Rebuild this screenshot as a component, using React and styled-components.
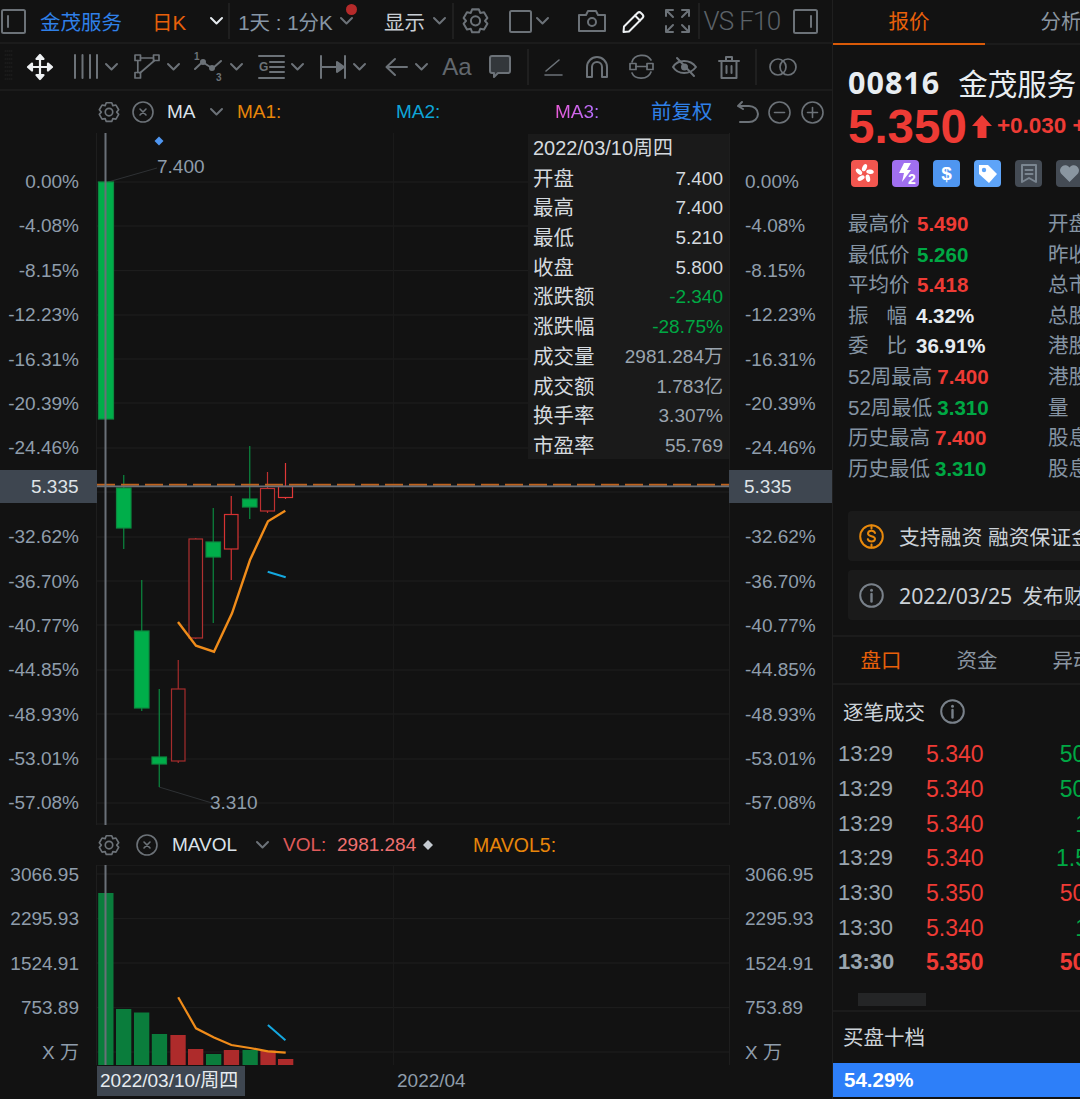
import React from "react";
import styled, { createGlobalStyle } from "styled-components";

const FONT = `"Liberation Sans", "Noto Sans CJK SC", sans-serif`;

const Global = createGlobalStyle`
  html, body { margin: 0; padding: 0; background: #121212; }
  body { font-family: ${FONT}; }
`;

// chart data in page coordinates, so the viewBox of each svg is just the crop of the page
const CANDLES = [
  { x: 98.5, w: 15, top: 182, bottom: 419, wick: null, fill: "#00ae4a" },
  { x: 116.5, w: 14.5, top: 488, bottom: 528, wick: [475, 549], fill: "#00ae4a" },
  { x: 134.5, w: 14.5, top: 631, bottom: 708, wick: [580, 711], fill: "#00ae4a" },
  { x: 152, w: 14.5, top: 757, bottom: 764, wick: [689, 787], fill: "#00ae4a" },
  { x: 171.5, w: 13.5, top: 689, bottom: 761, wick: [660, 763], line: "#a62c2c" },
  { x: 189, w: 13.5, top: 539, bottom: 638, wick: [538, 639], line: "#b03030" },
  { x: 206, w: 14.5, top: 542, bottom: 557, wick: [508, 623], fill: "#00ae4a" },
  { x: 224.5, w: 13.5, top: 514.5, bottom: 549, wick: [496, 580], line: "#d63232" },
  { x: 242.5, w: 14.5, top: 499, bottom: 507, wick: [446, 519], fill: "#00ae4a" },
  { x: 260.5, w: 14, top: 488.5, bottom: 511, wick: [472, 513], line: "#bd3030" },
  { x: 278.5, w: 14, top: 486.5, bottom: 497.5, wick: [463, 499], line: "#e03838" },
];

const VOLUMES = [
  { x: 98.2, top: 893, c: "#0a7d3c" },
  { x: 116, top: 1009, c: "#0a7d3c" },
  { x: 134, top: 1012.5, c: "#0a7d3c" },
  { x: 151.8, top: 1034, c: "#0a7d3c" },
  { x: 170.4, top: 1035, c: "#ae2b2b" },
  { x: 188, top: 1049, c: "#ae2b2b" },
  { x: 206, top: 1054, c: "#0a7d3c" },
  { x: 223.8, top: 1050, c: "#ae2b2b" },
  { x: 242.5, top: 1050, c: "#0a7d3c" },
  { x: 260.4, top: 1050.5, c: "#ae2b2b" },
  { x: 278, top: 1059, c: "#ae2b2b" },
];

const PRICE_GRID = [182, 226, 270.6, 315, 359, 403, 448, 492, 537, 581, 625, 670, 714, 759, 803, 824];
const VOL_GRID = [874, 918.7, 963, 1007.7, 1052];
const PERCENTS = ["0.00%", "-4.08%", "-8.15%", "-12.23%", "-16.31%", "-20.39%", "-24.46%", "", "-32.62%", "-36.70%", "-40.77%", "-44.85%", "-48.93%", "-53.01%", "-57.08%"];
const VOL_TICKS = ["3066.95", "2295.93", "1524.91", "753.89", "X 万"];

const QUOTE_ROWS = [
  ["开盘", "7.400"],
  ["最高", "7.400"],
  ["最低", "5.210"],
  ["收盘", "5.800"],
  ["涨跌额", "-2.340", "down"],
  ["涨跌幅", "-28.75%", "down"],
  ["成交量", "2981.284万", "dim"],
  ["成交额", "1.783亿", "dim"],
  ["换手率", "3.307%", "dim"],
  ["市盈率", "55.769", "dim"],
];

const STATS = [
  ["最高价", "5.490", "up", "开盘"],
  ["最低价", "5.260", "down", "昨收"],
  ["平均价", "5.418", "up", "总市值"],
  [["振", "幅"], "4.32%", "plain", "总股本"],
  [["委", "比"], "36.91%", "plain", "港股本"],
  ["52周最高", "7.400", "up", "港股值"],
  ["52周最低", "3.310", "down", "量　比"],
  ["历史最高", "7.400", "up", "股息"],
  ["历史最低", "3.310", "down", "股息率"],
];

const TRADES = [
  ["13:29", "5.340", "5000", "down"],
  ["13:29", "5.340", "5000", "down"],
  ["13:29", "5.340", "1万", "down"],
  ["13:29", "5.340", "1.5万", "down"],
  ["13:30", "5.350", "5000", "up"],
  ["13:30", "5.340", "1万", "down"],
  ["13:30", "5.350", "5000", "up", true],
];

const TONE = { up: "#ee3b35", down: "#00a844", plain: "#e6ebef" };

const Page = styled.div`
  width: 1080px;
  height: 1099px;
  overflow: hidden;
  display: flex;
  background: #121212;
  color: #c8ced4;
  font-family: ${FONT};
`;

const Left = styled.div`
  width: 832px;
  flex: none;
  border-right: 1px solid #1f1f1f;
`;

const Right = styled.div`
  width: 247px;
  flex: none;
  overflow: hidden;
`;

const Bar = styled.div`
  display: flex;
  align-items: center;
  height: ${(p) => p.$h}px;
  border-bottom: 2px solid #1b1b1b;
  box-sizing: border-box;
`;

const Slot = styled.div`
  position: relative;
  flex: none;
  display: flex;
  align-items: center;
  justify-content: center;
  margin-left: ${(p) => p.$ml || 0}px;
  width: ${(p) => p.$w}px;
  white-space: nowrap;
  color: ${(p) => p.$c || "#6c7278"};
  font-size: ${(p) => p.$fs || 20.5}px;
`;

const Divider = styled.div`
  flex: none;
  width: 2px;
  height: ${(p) => p.$h || 36}px;
  margin-left: ${(p) => p.$ml || 0}px;
  background: #1f1f1f;
`;

const RedDot = styled.span`
  position: absolute;
  top: -13px;
  right: -4px;
  width: 11px;
  height: 11px;
  border-radius: 50%;
  background: #b52a2a;
`;

const ThinText = styled.span`
  font-family: Roboto, ${FONT};
  font-weight: 300;
  font-size: 26px;
  letter-spacing: -0.7px;
  color: #5c6268;
`;

const Ico = styled.svg`
  display: block;
  flex: none;
  fill: none;
  color: ${(p) => p.$c || "inherit"};
  stroke: currentColor;
  stroke-width: ${(p) => p.$sw || 2};
  stroke-linecap: round;
  stroke-linejoin: round;
  overflow: visible;
`;

const Chevron = () => (
  <Ico width="13" height="8" viewBox="0 0 13 8">
    <path d="M1 1l5.5 5.5L12 1" />
  </Ico>
);

const Gear = ({ size = 27 }) => (
  <Ico width={size} height={(size * 22) / 20} viewBox="2 0 20 22" $sw={1.5}>
    <path d="M9.5 2.5h5l1 2.6 2.8-.5 2.5 4.3-1.8 2.1 1.8 2.1-2.5 4.3-2.8-.5-1 2.6h-5l-1-2.6-2.8.5-2.5-4.3 1.8-2.1-1.8-2.1 2.5-4.3 2.8.5z" />
    <circle cx="12" cy="11" r="3.4" />
  </Ico>
);

const CloseCircle = ({ size = 22 }) => (
  <Ico width={size} height={size} viewBox="0 0 22 22" $sw={1.6}>
    <circle cx="11" cy="11" r="10" />
    <path d="M8 8l6 6M14 8l-6 6" />
  </Ico>
);

const PanelIcon = ({ flip }) => (
  <Ico width="25" height="25" viewBox="0 0 25 25">
    <rect x="1" y="1" width="23" height="23" rx="1.5" />
    <path d={flip ? "M18 7v11" : "M7 7v11"} />
  </Ico>
);

const MoveIcon = () => (
  <Ico width="28" height="28" viewBox="0 0 28 28" $sw={2.2} $c="#eef1f3">
    <path d="M14 3v22M3 14h22" />
    <path d="M10.5 6L14 2l3.5 4zM10.5 22l3.5 4 3.5-4zM6 10.5L2 14l4 3.5zM22 10.5l4 3.5-4 3.5z" fill="currentColor" />
  </Ico>
);

const VLinesIcon = () => (
  <Ico width="24" height="25" viewBox="0 0 24 25">
    <path d="M1 1v23M8.5 1v23M16 1v23M23 1v23" />
  </Ico>
);

const PolyIcon = () => (
  <Ico width="26" height="25" viewBox="0 0 26 25" $sw={1.7}>
    <rect x="1" y="1" width="5.5" height="5.5" />
    <rect x="19.5" y="1" width="5.5" height="5.5" />
    <rect x="1" y="18.5" width="5.5" height="5.5" />
    <path d="M6.5 4h13M3.8 6.500v12M20.5 6.500L6 19" />
  </Ico>
);

const WaveIcon = () => (
  <Ico width="30" height="30" viewBox="0 0 30 30">
    <path d="M1 17l7.5-7 10 6.500L27 9" />
    <circle cx="9" cy="10" r="2" fill="currentColor" />
    <circle cx="18" cy="16" r="2" fill="currentColor" />
    <text x="0" y="8" fontSize="10" fontWeight="700" fill="currentColor" stroke="none">1</text>
    <text x="22" y="29" fontSize="10" fontWeight="700" fill="currentColor" stroke="none">3</text>
  </Ico>
);

const FibIcon = () => (
  <Ico width="26" height="24" viewBox="0 0 26 24">
    <path d="M1 1h25M12 7h14M12 12h14M12 17h14M1 23h25" />
    <text x="1" y="16" fontSize="12" fontWeight="700" fill="currentColor" stroke="none">G</text>
  </Ico>
);

const MeasureIcon = () => (
  <Ico width="26" height="24" viewBox="0 0 26 24">
    <path d="M1 1v22M25 1v22M1 12h22" />
    <path d="M17 7l7 5-7 5z" fill="currentColor" />
  </Ico>
);

const ArrowIcon = () => (
  <Ico width="23" height="20" viewBox="0 0 23 20">
    <path d="M22 10H2M10 2l-8.500 8 8.500 8" />
  </Ico>
);

const CommentIcon = () => (
  <Ico width="22" height="24" viewBox="0 0 22 24">
    <path d="M3 1h16a2 2 0 0 1 2 2v13a2 2 0 0 1-2 2H9l-4 4v-4H3a2 2 0 0 1-2-2V3a2 2 0 0 1 2-2z" fill="#33373b" />
  </Ico>
);

const AngleIcon = () => (
  <Ico width="18" height="18" viewBox="0 0 18 18" $sw={1.6}>
    <path d="M1 17h17M2 13L15 2" />
  </Ico>
);

const MagnetIcon = () => (
  <Ico width="22" height="22" viewBox="0 0 22 22">
    <path d="M1 21V11a10 10 0 0 1 20 0v10h-5V11a5 5 0 0 0-10 0v10z" />
  </Ico>
);

const LinkIcon = () => (
  <Ico width="25" height="26" viewBox="0 0 25 26" $sw={1.7}>
    <rect x="1" y="9.5" width="6" height="6" />
    <rect x="18" y="9.5" width="6" height="6" />
    <path d="M7 12.5h11M3 8c2-8 15-9 19-2M22 18c-3 8-16 8-19 1" />
  </Ico>
);

const EyeOffIcon = () => (
  <Ico width="25" height="22" viewBox="0 0 25 22">
    <path d="M1 11C6 3 18 3 24 11c-6 8-18 8-23 0z" />
    <path d="M5 2l17 18" />
    <circle cx="12.5" cy="11" r="3.5" fill="currentColor" stroke="none" />
  </Ico>
);

const TrashIcon = () => (
  <Ico width="22" height="24" viewBox="0 0 22 24">
    <path d="M1 6h20M8 6V2h6v4M3.5 6v17h15V6M8.500 11v7M13.500 11v7" />
  </Ico>
);

const RingsIcon = () => (
  <Ico width="28" height="18" viewBox="0 0 28 18" $sw={1.7}>
    <circle cx="9" cy="9" r="8" />
    <circle cx="19" cy="9" r="8" />
  </Ico>
);

const CameraIcon = () => (
  <Ico width="28" height="22" viewBox="0 0 28 22">
    <path d="M1 5h7l2-4h8l2 4h7v16H1z" />
    <circle cx="14" cy="12" r="4" />
  </Ico>
);

const PencilIcon = () => (
  <Ico width="23" height="23" viewBox="0 0 23 23" $c="#eef1f3">
    <path d="M2 16.500L15.500 3a2.500 2.500 0 0 1 3.500 0L20.500 4.500a2.500 2.500 0 0 1 0 3.500L7 21.500 1.500 22z" />
    <path d="M13 5.500l5 5" />
  </Ico>
);

const ExpandIcon = () => (
  <Ico width="25" height="24" viewBox="0 0 25 24">
    <path d="M1 7V1h7M17 1h7v6M1 17v6h7M17 23h7v-6M2 2l6 6M23 2l-6 6M2 22l6-6M23 22l-6-6" />
  </Ico>
);

const UndoIcon = () => (
  <Ico width="22" height="22" viewBox="0 0 22 22">
    <path d="M5 1L1 5l5 3M1 5h11a9 8 0 0 1 0 16H3" />
  </Ico>
);

const RoundIcon = ({ plus }) => (
  <Ico width="23" height="23" viewBox="0 0 23 23" $sw={1.6}>
    <circle cx="11.500" cy="11.500" r="10.500" />
    <path d={plus ? "M6.500 11.500h10M11.500 6.500v10" : "M6.500 11.500h10"} />
  </Ico>
);

const LegendBar = styled.div`
  display: flex;
  align-items: center;
  height: ${(p) => p.$h}px;
  font-size: 19px;
`;

const LegendText = styled.span`
  flex: none;
  width: ${(p) => p.$w}px;
  margin-left: ${(p) => p.$ml || 0}px;
  padding-bottom: ${(p) => p.$pb || 0}px;
  color: ${(p) => p.$c};
  font-size: ${(p) => p.$fs || 19}px;
  white-space: nowrap;
`;

const GradientText = styled(LegendText)`
  background: linear-gradient(90deg, #ea5cd8, #b070ff);
  -webkit-background-clip: text;
  background-clip: text;
  color: transparent;
`;

const Small = styled.span`
  flex: none;
  margin-left: ${(p) => p.$ml}px;
  color: #6c7278;
`;

const ChartRow = styled.div`
  position: relative;
  display: grid;
  grid-template-columns: 97px 632px 103px;
  height: ${(p) => p.$h}px;
`;

const Axis = styled.div`
  display: flex;
  flex-direction: column;
  margin-top: ${(p) => p.$top}px;
  height: 0;
  font-size: 19px;
  color: #8f9dab;
  white-space: nowrap;
`;

const Tick = styled.div`
  flex: none;
  height: 44.4px;
  line-height: 44.4px;
  text-align: ${(p) => (p.$right ? "left" : "right")};
  padding: ${(p) => (p.$right ? "0 0 0 16px" : "0 18px 0 0")};
`;

const Plot = styled.div`
  position: relative;
  border-left: 1px solid #1e1e1e;
  border-right: 1px solid #1e1e1e;
  margin: 0 -1px;
  svg {
    display: block;
  }
`;

const QuoteCard = styled.div`
  position: absolute;
  top: 1px;
  right: 0;
  width: 201px;
  height: 325px;
  padding: 0 6px 0 5px;
  box-sizing: border-box;
  background: #1a1a1a;
  font-size: 20.5px;
`;

const QuoteRow = styled.div`
  display: flex;
  justify-content: space-between;
  height: 29.7px;
  line-height: 29.7px;
  white-space: nowrap;
  color: #d4d9de;
`;

const QuoteTitle = styled(QuoteRow)`
  font-size: 20px;
`;

const QuoteValue = styled.span`
  color: ${(p) => (p.$tone === "down" ? "#00a844" : p.$tone === "dim" ? "#9aa4ae" : "#d4d9de")};
  font-size: 19px;
`;

const PriceMark = styled.span`
  position: absolute;
  left: ${(p) => p.$x}px;
  top: ${(p) => p.$y}px;
  font-size: 19px;
  line-height: 22px;
  color: #8f9dab;
`;

const CrossBadge = styled.div`
  position: absolute;
  top: 337px;
  ${(p) => (p.$right ? "left: 729px; width: 103px; padding-left: 15px;" : "left: 0; width: 97px; padding-left: 31px;")}
  height: 33px;
  line-height: 33px;
  box-sizing: border-box;
  background: #3e4650;
  color: #dfe4e8;
  font-size: 19px;
`;

const VolDiamond = styled.svg`
  flex: none;
`;

const TimeAxis = styled.div`
  display: flex;
  padding-left: 97px;
  height: 34px;
  font-size: 19px;
  color: #8f9dab;
`;

const DateBadge = styled.div`
  flex: none;
  width: 148px;
  height: 30px;
  margin-top: 1px;
  line-height: 30px;
  padding-left: 3px;
  box-sizing: border-box;
  background: #3e4650;
  color: #e6ebef;
  white-space: nowrap;
`;

const MonthTick = styled.div`
  margin-left: 152px;
  line-height: 30px;
  margin-top: 1px;
`;

const Tabs = styled.div`
  display: flex;
  height: ${(p) => p.$h}px;
  border-bottom: 2px solid #1b1b1b;
  box-sizing: border-box;
`;

const Tab = styled.div`
  flex: none;
  width: ${(p) => p.$w}px;
  text-align: center;
  box-sizing: border-box;
  line-height: ${(p) => p.$lh}px;
  font-size: 20.5px;
  white-space: nowrap;
  color: ${(p) => (p.$active ? "#e8600a" : "#8a95a0")};
  ${(p) => p.$bar && "border-bottom: 2px solid #d95a08; margin-bottom: -2px;"}
`;

const TitleRow = styled.div`
  display: flex;
  align-items: center;
  height: 36px;
  margin-top: 19px;
  padding-left: 15px;
  white-space: nowrap;
  color: #e8edf1;
`;

const Code = styled.span`
  font-family: "Open Sans", ${FONT};
  font-weight: 700;
  font-size: 30.5px;
  letter-spacing: 1px;
`;

const Name = styled.span`
  margin-left: 18px;
  font-size: 29.5px;
`;

const PriceRow = styled.div`
  display: flex;
  align-items: center;
  height: 50px;
  margin-top: 1px;
  padding-left: 15px;
  white-space: nowrap;
  color: #ee3b35;
  font-weight: 700;
`;

const BigPrice = styled.span`
  flex: none;
  font-size: 47.5px;
`;

const UpArrow = styled.svg`
  flex: none;
  margin-left: 4px;
`;

const Change = styled.span`
  flex: none;
  margin-left: 4px;
  font-size: 22.5px;
`;

const Badges = styled.div`
  display: flex;
  gap: 14px;
  margin: 9px 0 0 18px;
`;

const Badge = styled.div`
  flex: none;
  width: 27px;
  height: 27px;
  border-radius: 4px;
  background: ${(p) => p.$bg};
  color: ${(p) => p.$c || "#fff"};
  display: flex;
  align-items: center;
  justify-content: center;
  font-weight: 700;
  font-size: 19px;
`;

const Stats = styled.div`
  margin-top: 22px;
  padding-left: 15px;
`;

const StatRow = styled.div`
  display: flex;
  height: 30.6px;
  line-height: 30.6px;
  white-space: nowrap;
  font-size: 20.5px;
  color: #8594a3;
`;

const StatMain = styled.div`
  flex: none;
  width: 200px;
  display: flex;
`;

const StatLabel = styled.span`
  flex: none;
  margin-right: 5px;
  min-width: 64px;
`;

const SpreadLabel = styled.span`
  flex: none;
  width: 59px;
  margin-right: 9px;
  display: flex;
  justify-content: space-between;
`;

const StatValue = styled.span`
  font-weight: 700;
  font-size: 20.5px;
  color: ${(p) => TONE[p.$tone]};
`;

const Notice = styled.div`
  display: flex;
  align-items: center;
  width: 262px;
  height: 50px;
  margin: ${(p) => p.$mt}px 0 0 15px;
  padding-left: 11px;
  box-sizing: border-box;
  border-radius: 4px;
  background: #1a1a1a;
  font-size: 20.8px;
  white-space: nowrap;
  color: #ccd2d8;
`;

const NoticeText = styled.span`
  margin-left: 15px;
`;

const NoticeDate = styled.span`
  font-family: "Noto Sans", ${FONT};
  font-size: 21.3px;
  margin-right: 10px;
`;

const SubHead = styled.div`
  display: flex;
  align-items: center;
  padding: 0 0 ${(p) => p.$pb || 0}px 10px;
  height: ${(p) => p.$h}px;
  box-sizing: border-box;
  font-size: 20.5px;
  color: #ccd2d8;
  white-space: nowrap;
`;

const Trades = styled.div`
  width: 280px;
`;

const TradeRow = styled.div`
  display: grid;
  grid-template-columns: 88px 105px 80px;
  height: 34.7px;
  line-height: 34.7px;
  padding-left: 5px;
  font-size: 23px;
  font-weight: ${(p) => (p.$bold ? 700 : 400)};
  white-space: nowrap;
`;

const TradeTime = styled.span`
  color: #9aa5af;
  font-size: 22px;
`;

const TradeNum = styled.span`
  color: ${(p) => TONE[p.$tone]};
  text-align: ${(p) => (p.$end ? "right" : "left")};
`;

const ScrollThumb = styled.div`
  width: 68px;
  height: 13px;
  margin: 13px 0 4px 25px;
  background: #242526;
`;

const BuyBar = styled.div`
  height: 34px;
  line-height: 33px;
  padding-left: 11px;
  background: #2d7ff9;
  color: #fff;
  font-size: 20.5px;
  font-weight: 700;
`;

const HairLine = styled.div`
  height: 2px;
  margin-top: ${(p) => p.$mt || 0}px;
  background: #1b1b1b;
`;

const PriceChart = () => (
  <svg width="632" height="692" viewBox="97 133 632 692">
    {PRICE_GRID.map((y) => (
      <line key={y} x1="97" x2="729" y1={y} y2={y} stroke="#1f1f1f" />
    ))}
    <line x1="393.5" x2="393.5" y1="133" y2="825" stroke="#1a1a1a" />
    <path d="M108 182L157 168M159 787L212 803" stroke="#2e3134" fill="none" />
    <path d="M159 136.500l4.500 4.500-4.500 4.500-4.500-4.500z" fill="#4f96f0" />
    {CANDLES.map((c) => (
      <g key={c.x}>
        {c.wick && (
          <line
            x1={c.x + c.w / 2}
            x2={c.x + c.w / 2}
            y1={c.wick[0]}
            y2={c.wick[1]}
            stroke={c.fill ? "#0b8a40" : c.line}
            strokeWidth="1.2"
          />
        )}
        <rect
          x={c.x}
          y={c.top}
          width={c.w}
          height={c.bottom - c.top}
          fill={c.fill || "#121212"}
          stroke={c.fill ? "#0b8a40" : c.line}
          strokeWidth="1.2"
        />
      </g>
    ))}
    <polyline
      points="178,622 196,645.7 214,651.7 232,613.3 250,560 268,521.3 285.3,510.7"
      fill="none"
      stroke="#f08c1a"
      strokeWidth="2.4"
    />
    <line x1="267.7" y1="571.7" x2="285.7" y2="577.3" stroke="#14a8e0" strokeWidth="2" />
    <line x1="97" x2="729" y1="484.7" y2="484.7" stroke="#c0621c" strokeWidth="2" strokeDasharray="18 6" />
    <line x1="97" x2="729" y1="486.4" y2="486.4" stroke="#6a7078" strokeWidth="1.6" />
    <line x1="105.5" x2="105.5" y1="133" y2="825" stroke="#6a7078" strokeWidth="2" />
  </svg>
);

const VolumeChart = () => (
  <svg width="632" height="200" viewBox="97 865 632 200">
    {VOL_GRID.map((y) => (
      <line key={y} x1="97" x2="729" y1={y} y2={y} stroke="#1f1f1f" />
    ))}
    <line x1="97" x2="729" y1="865.5" y2="865.5" stroke="#1a1a1a" />
    <line x1="393.5" x2="393.5" y1="865" y2="1065" stroke="#1a1a1a" />
    {VOLUMES.map((v) => (
      <rect key={v.x} x={v.x} y={v.top} width="15.3" height={1065 - v.top} fill={v.c} />
    ))}
    <polyline
      points="178.2,997.3 196,1028.3 214,1037.5 231.4,1045 250,1048 267.9,1051.3 285.7,1052.7"
      fill="none"
      stroke="#f08c1a"
      strokeWidth="2.2"
    />
    <line x1="267.9" y1="1025" x2="285.4" y2="1040.3" stroke="#14a8e0" strokeWidth="2" />
    <line x1="105.5" x2="105.5" y1="865" y2="1065" stroke="#6a7078" strokeWidth="2" />
  </svg>
);

const TopBar = () => (
  <Bar $h={44}>
    <Slot $ml={1} $w={25}><PanelIcon /></Slot>
    <Slot $ml={14} $w={82} $c="#2f80e8">金茂服务</Slot>
    <Slot $ml={31} $w={32} $c="#e8600a">日K</Slot>
    <Slot $ml={25} $w={13} $c="#e6ebef"><Chevron /></Slot>
    <Divider $ml={5} />
    <Slot $ml={8} $w={95} $c="#8796a5">1天 : 1分K</Slot>
    <Slot $ml={7} $w={13}>
      <Chevron />
      <RedDot />
    </Slot>
    <Slot $ml={31} $w={41} $c="#c8ced4">显示</Slot>
    <Slot $ml={8} $w={13}><Chevron /></Slot>
    <Divider $ml={6} />
    <Slot $ml={8} $w={27}><Gear /></Slot>
    <Slot $ml={20} $w={22}>
      <Ico width="23" height="23" viewBox="0 0 23 23"><rect x="1" y="1" width="21" height="21" rx="1.5" /></Ico>
    </Slot>
    <Slot $ml={5} $w={13}><Chevron /></Slot>
    <Slot $ml={29} $w={28}><CameraIcon /></Slot>
    <Slot $ml={16} $w={23}><PencilIcon /></Slot>
    <Slot $ml={20} $w={25}><ExpandIcon /></Slot>
    <Divider $ml={8} />
    <Slot $ml={4} $w={76}><ThinText>VS F10</ThinText></Slot>
    <Slot $ml={13} $w={25}><PanelIcon flip /></Slot>
  </Bar>
);

const grip = [56, 60, 64, 68, 72, 76, 80, 84];

const DrawBar = () => (
  <Bar $h={47}>
    <Slot $ml={5} $w={8} $c="#222">
      <Ico width="8" height="32" viewBox="0 56 8 32" $sw={1}>
        {grip.map((y) => (
          <path key={y} d={`M0 ${y}h8`} strokeDasharray="1 1" />
        ))}
      </Ico>
    </Slot>
    <Slot $ml={13} $w={28}><MoveIcon /></Slot>
    <Slot $ml={20} $w={24}><VLinesIcon /></Slot>
    <Slot $ml={7} $w={13}><Chevron /></Slot>
    <Slot $ml={16} $w={26}><PolyIcon /></Slot>
    <Slot $ml={7} $w={13}><Chevron /></Slot>
    <Slot $ml={14} $w={30}><WaveIcon /></Slot>
    <Slot $ml={6} $w={13}><Chevron /></Slot>
    <Slot $ml={15} $w={26}><FibIcon /></Slot>
    <Slot $ml={7} $w={13}><Chevron /></Slot>
    <Slot $ml={16} $w={26}><MeasureIcon /></Slot>
    <Slot $ml={7} $w={13}><Chevron /></Slot>
    <Slot $ml={19} $w={23}><ArrowIcon /></Slot>
    <Slot $ml={7} $w={13}><Chevron /></Slot>
    <Slot $ml={15} $w={28} $fs={24} $c="#62686e">Aa</Slot>
    <Slot $ml={18} $w={22}><CommentIcon /></Slot>
    <Divider $ml={16} />
    <Slot $ml={15} $w={18}><AngleIcon /></Slot>
    <Slot $ml={24} $w={22}><MagnetIcon /></Slot>
    <Slot $ml={21} $w={25}><LinkIcon /></Slot>
    <Slot $ml={18} $w={25}><EyeOffIcon /></Slot>
    <Slot $ml={21} $w={22}><TrashIcon /></Slot>
    <Divider $ml={15} />
    <Slot $ml={12} $w={28}><RingsIcon /></Slot>
  </Bar>
);

const Ticks = ({ labels, right, top }) => (
  <Axis $top={top}>
    {labels.map((label, i) => (
      <Tick key={i} $right={right}>{label}</Tick>
    ))}
  </Axis>
);

const FlagBadge = () => (
  <Badge $bg="#f2564f">
    <svg width="21" height="21" viewBox="-10.5 -10.5 21 21" fill="#fff">
      {[0, 72, 144, 216, 288].map((a) => (
        <ellipse key={a} cx="0" cy="-5.8" rx="2.2" ry="3.8" transform={`rotate(${a}) rotate(25 0 -5.8)`} />
      ))}
    </svg>
  </Badge>
);

const BoltBadge = () => (
  <Badge $bg="#a06ff0">
    <svg width="25" height="25" viewBox="0 0 25 25">
      <path d="M11 2h7l-4 7h4l-9 12 2-9H6z" fill="#fff" />
      <text x="15" y="23" fontSize="14" fontWeight="700" fill="#fff">2</text>
    </svg>
  </Badge>
);

const TagBadge = () => (
  <Badge $bg="#5ea4f8">
    <svg width="23" height="23" viewBox="0 0 23 23">
      <path d="M3 3h9l9 9-8 9-10-9z" fill="#fff" />
      <circle cx="8" cy="8" r="2.2" fill="#5ea4f8" />
    </svg>
  </Badge>
);

const NoteBadge = () => (
  <Badge $bg="#444b54" $c="#7b8691">
    <Ico width="16" height="19" viewBox="0 0 16 19" $sw={2}>
      <path d="M1 1h14v17l-7-4-7 4z" />
      <path d="M4.500 6h7M4.500 10h7" />
    </Ico>
  </Badge>
);

const HeartBadge = () => (
  <Badge $bg="#444b54">
    <svg width="21" height="19" viewBox="0 0 21 19">
      <path d="M10.500 18L2 9.500a5 5 0 0 1 8.500-6 5 5 0 0 1 8.500 6z" fill="#8a96a1" />
    </svg>
  </Badge>
);

const DollarRing = () => (
  <Ico width="25" height="25" viewBox="0 0 25 25" $c="#e8890c">
    <circle cx="12.500" cy="12.500" r="11.300" />
    <path d="M12.500 1.500v3M12.500 20.500v3M16 9c-.5-1.600-2-2.200-3.500-2.200-2 0-3.500 1-3.500 2.800 0 3.600 7 1.600 7 5.200 0 1.700-1.600 2.600-3.500 2.600-1.700 0-3.200-.7-3.700-2.300" />
  </Ico>
);

const InfoRing = () => (
  <Ico width="25" height="25" viewBox="0 0 25 25" $c="#79818a">
    <circle cx="12.500" cy="12.500" r="11.300" />
    <path d="M12.500 11v7.500" strokeWidth="2.4" />
    <circle cx="12.500" cy="7.200" r="1.500" fill="currentColor" stroke="none" />
  </Ico>
);

export default function App() {
  return (
    <>
      <Global />
      <Page>
        <Left>
          <TopBar />
          <DrawBar />
          <LegendBar $h={42}>
            <Slot $ml={98} $w={22}><Gear size={22} /></Slot>
            <Slot $ml={12} $w={22}><CloseCircle /></Slot>
            <LegendText $ml={13} $w={30} $c="#dbe3ea">MA</LegendText>
            <Small $ml={13}><Chevron /></Small>
            <LegendText $ml={14} $w={159} $c="#e8860a">MA1:</LegendText>
            <LegendText $w={159} $c="#0ea5d8">MA2:</LegendText>
            <GradientText $w={44} $c="#d050d0">MA3:</GradientText>
            <LegendText $ml={52} $w={63} $fs={20.5} $pb={4} $c="#2f80e8">前复权</LegendText>
            <Small $ml={23}><UndoIcon /></Small>
            <Small $ml={9}><RoundIcon /></Small>
            <Small $ml={10}><RoundIcon plus /></Small>
          </LegendBar>
          <ChartRow $h={692}>
            <Ticks labels={PERCENTS} top={27} />
            <Plot>
              <PriceChart />
              <PriceMark $x={60} $y={23}>7.400</PriceMark>
              <PriceMark $x={113} $y={659}>3.310</PriceMark>
              <QuoteCard>
                <QuoteTitle>2022/03/10周四</QuoteTitle>
                {QUOTE_ROWS.map(([label, value, tone]) => (
                  <QuoteRow key={label}>
                    <span>{label}</span>
                    <QuoteValue $tone={tone}>{value}</QuoteValue>
                  </QuoteRow>
                ))}
              </QuoteCard>
            </Plot>
            <Ticks labels={PERCENTS} right top={27} />
            <CrossBadge>5.335</CrossBadge>
            <CrossBadge $right>5.335</CrossBadge>
          </ChartRow>
          <LegendBar $h={40}>
            <Slot $ml={98} $w={22}><Gear size={22} /></Slot>
            <Slot $ml={16} $w={22}><CloseCircle /></Slot>
            <LegendText $ml={14} $w={66} $c="#dbe3ea">MAVOL</LegendText>
            <Small $ml={18}><Chevron /></Small>
            <LegendText $ml={14} $w={54} $c="#e05a5a">VOL:</LegendText>
            <LegendText $w={86} $c="#f07070">2981.284</LegendText>
            <VolDiamond width="10" height="10" viewBox="0 0 10 10">
              <path d="M5 0l5 5-5 5-5-5z" fill="#c4cad0" />
            </VolDiamond>
            <LegendText $ml={40} $w={84} $fs={19.5} $c="#e8860a">MAVOL5:</LegendText>
          </LegendBar>
          <ChartRow $h={200}>
            <Ticks labels={VOL_TICKS} top={-12} />
            <Plot><VolumeChart /></Plot>
            <Ticks labels={VOL_TICKS} right top={-12} />
          </ChartRow>
          <TimeAxis>
            <DateBadge>2022/03/10/周四</DateBadge>
            <MonthTick>2022/04</MonthTick>
          </TimeAxis>
        </Left>
        <Right>
          <Tabs $h={45}>
            <Tab $w={152} $lh={43} $active $bar>报价</Tab>
            <Tab $w={152} $lh={43}>分析</Tab>
          </Tabs>
          <TitleRow>
            <Code>00816</Code>
            <Name>金茂服务</Name>
          </TitleRow>
          <PriceRow>
            <BigPrice>5.350</BigPrice>
            <UpArrow width="22" height="25" viewBox="0 0 22 25">
              <path d="M11 1l10 11h-5.500v12h-9V12H1z" fill="#ee3b35" />
            </UpArrow>
            <Change>+0.030 +0.56%</Change>
          </PriceRow>
          <Badges>
            <FlagBadge />
            <BoltBadge />
            <Badge $bg="#4f96f0">$</Badge>
            <TagBadge />
            <NoteBadge />
            <HeartBadge />
          </Badges>
          <Stats>
            {STATS.map(([label, value, tone, side]) => (
              <StatRow key={side}>
                <StatMain>
                  {Array.isArray(label) ? (
                    <SpreadLabel>
                      <span>{label[0]}</span>
                      <span>{label[1]}</span>
                    </SpreadLabel>
                  ) : (
                    <StatLabel>{label}</StatLabel>
                  )}
                  <StatValue $tone={tone}>{value}</StatValue>
                </StatMain>
                <span>{side}</span>
              </StatRow>
            ))}
          </Stats>
          <Notice $mt={27}>
            <DollarRing />
            <NoticeText>支持融资 融资保证金比例</NoticeText>
          </Notice>
          <Notice $mt={9}>
            <InfoRing />
            <NoticeText>
              <NoticeDate>2022/03/25</NoticeDate>发布财报
            </NoticeText>
          </Notice>
          <HairLine $mt={15} />
          <Tabs $h={48}>
            <Tab $w={96} $lh={47} $active>盘口</Tab>
            <Tab $w={96} $lh={47}>资金</Tab>
            <Tab $w={96} $lh={47}>异动</Tab>
          </Tabs>
          <SubHead $h={52}>
            逐笔成交
            <Small $ml={15}><InfoRing /></Small>
          </SubHead>
          <Trades>
            {TRADES.map(([time, price, vol, tone, bold], i) => (
              <TradeRow key={i} $bold={bold}>
                <TradeTime>{time}</TradeTime>
                <TradeNum $tone="up">{price}</TradeNum>
                <TradeNum $tone={tone} $end>{vol}</TradeNum>
              </TradeRow>
            ))}
          </Trades>
          <ScrollThumb />
          <HairLine />
          <SubHead $h={51} $pb={4}>买盘十档</SubHead>
          <BuyBar>54.29%</BuyBar>
        </Right>
      </Page>
    </>
  );
}
